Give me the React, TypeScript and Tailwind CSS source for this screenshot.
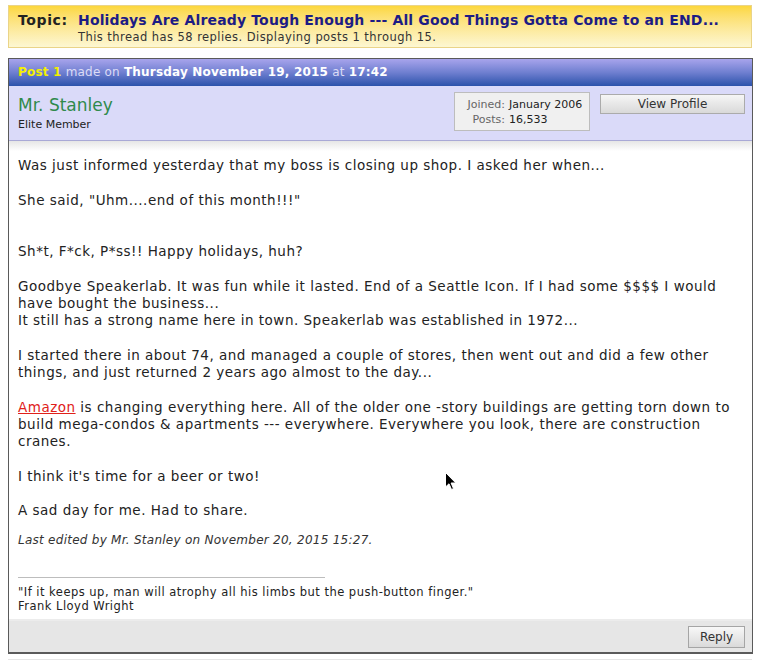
export default function App() {
  const font = { fontFamily: '"DejaVu Sans", Verdana, sans-serif' };
  return (
    <div className="relative w-[760px] h-[664px] bg-white overflow-hidden text-[#222]" style={font}>
      {/* Topic bar */}
      <div className="mx-2 mt-[5px] h-[43px] border border-[#ead488] bg-gradient-to-b from-[#fcd73a] to-[#fdf7d2] pl-[9px] pt-[5px]">
        <div className="flex items-baseline text-[14px] font-bold leading-[18px] tracking-[0.16px]">
          <span className="w-[60px] tracking-[0.6px] text-[#222]">Topic:</span>
          <span className="text-[#1c1c85]">Holidays Are Already Tough Enough --- All Good Things Gotta Come to an END...</span>
        </div>
        <div className="pl-[60px] text-[11.5px] leading-[16px] tracking-[0.44px] text-[#333]">
          This thread has 58 replies. Displaying posts 1 through 15.
        </div>
      </div>

      {/* Post */}
      <div className="mx-2 mt-[10px] w-[745px] border border-[#5a5a5a] border-b-2">
        <div className="h-[27px] bg-gradient-to-b from-[#a8a4ec] via-[#6f7fd0] to-[#2b52ab] pl-[9px] text-[12px] leading-[27px] tracking-[0.2px] text-[#dcdcf6]">
          <span className="font-bold text-[#f4f000]">Post 1</span> made on{" "}
          <span className="font-bold text-white">Thursday November 19, 2015</span> at{" "}
          <span className="font-bold text-white">17:42</span>
        </div>
        <div className="flex h-[55px] items-start border-b border-[#a9a9d6] bg-[#dadaf9] pl-[9px]">
          <div className="pt-[8px]">
            <div className="text-[17px] leading-[22px] text-[#2f8a4c]">Mr. Stanley</div>
            <div className="mt-[2px] text-[11px] leading-[14px] text-[#222]">Elite Member</div>
          </div>
          <div className="ml-auto mt-[6px] flex h-[39px] w-[136px] whitespace-nowrap border border-[#bdbdbd] bg-[#f0f0f0] pt-[4px] text-[11px] leading-[15px]">
            <div className="w-[50px] text-right text-[#666]">
              <div>Joined:</div>
              <div>Posts:</div>
            </div>
            <div className="pl-[4px] text-[#222]">
              <div>January 2006</div>
              <div>16,533</div>
            </div>
          </div>
          <button className="ml-[10px] mr-[7px] mt-[8px] h-[20px] w-[145px] border border-[#ababab] bg-gradient-to-b from-[#f6f6f6] to-[#d9d9d9] text-[12px] leading-[18px] text-[#333]">
            View Profile
          </button>
        </div>

        {/* Body */}
        <div className="bg-gradient-to-b from-[#e6e6e6] to-white to-[10px] bg-no-repeat px-[9px] pt-[16px] pb-[6px] text-[13.5px] leading-[17.25px] tracking-[0.5px] text-[#222]">
          <p>Was just informed yesterday that my boss is closing up shop. I asked her when...</p>
          <p className="mt-[17.25px]">She said, "Uhm....end of this month!!!"</p>
          <p className="mt-[34.5px]">Sh*t, F*ck, P*ss!! Happy holidays, huh?</p>
          <p className="mt-[17.25px]">
            Goodbye Speakerlab. It was fun while it lasted. End of a Seattle Icon. If I had some $$$$ I would
            <br />
            have bought the business...
            <br />
            It still has a strong name here in town. Speakerlab was established in 1972...
          </p>
          <p className="mt-[17.25px]">
            I started there in about 74, and managed a couple of stores, then went out and did a few other
            <br />
            things, and just returned 2 years ago almost to the day...
          </p>
          <p className="mt-[17.25px]">
            <span className="text-[#e0201a] underline">Amazon</span> is changing everything here. All of the older one -story buildings are getting torn down to
            <br />
            build mega-condos &amp; apartments --- everywhere. Everywhere you look, there are construction
            <br />
            cranes.
          </p>
          <p className="mt-[17.25px]">I think it's time for a beer or two!</p>
          <p className="mt-[17.25px]">A sad day for me. Had to share.</p>
          <p className="mt-[13px] text-[12px] italic leading-[16px] tracking-[0.26px] text-[#333]">
            Last edited by Mr. Stanley on November 20, 2015 15:27.
          </p>
          <div className="mt-[29px] w-[307px] border-t border-[#bdbdbd]" />
          <div className="mt-[7px] text-[11.5px] leading-[14px] tracking-[0.48px] text-[#222]">
            "If it keeps up, man will atrophy all his limbs but the push-button finger."
            <br />
            Frank Lloyd Wright
          </div>
        </div>

        {/* Footer */}
        <div className="flex h-[33px] items-start justify-end border-t-2 border-[#ececec] bg-[#e6e6e6] pr-[7px] pt-[5px]">
          <button className="h-[22px] w-[57px] border border-[#a5a5a5] bg-gradient-to-b from-[#f8f8f8] to-[#dadada] text-[12px] leading-[20px] text-[#333]">
            Reply
          </button>
        </div>
      </div>
      <div className="mx-2 mt-[5px] h-px bg-[#e6e6e6]" />

      {/* Mouse cursor */}
      <svg className="absolute left-[445px] top-[472px]" width="12" height="19" viewBox="0 0 12 19">
        <path d="M0.5 0.5 L0.5 15 L4 11.8 L6.5 17.5 L8.5 16.6 L6.1 11 L10.8 11 Z" fill="#000" stroke="#fff" strokeWidth="1" />
      </svg>
    </div>
  );
}
